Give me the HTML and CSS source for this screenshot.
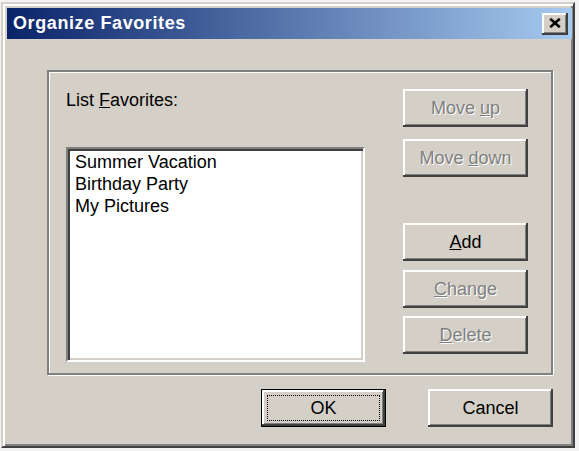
FILE: index.html
```html
<!DOCTYPE html>
<html>
<head>
<meta charset="utf-8">
<title>Organize Favorites</title>
<link rel="stylesheet" href="styles.css">
</head>
<body>
<div class="window">
  <div class="titlebar">
    <span class="title">Organize Favorites</span>
    <button class="close" aria-label="Close">
      <svg width="12" height="10" viewBox="0 0 12 10"><path d="M1.2 0.8 L10.8 9.2 M10.8 0.8 L1.2 9.2" stroke="#000" stroke-width="2.6" fill="none"/></svg>
    </button>
  </div>
  <div class="client">
    <div class="group">
      <div class="left">
        <div class="label">List <u>F</u>avorites:</div>
        <div class="listbox">
          <div class="item">Summer Vacation</div>
          <div class="item">Birthday Party</div>
          <div class="item">My Pictures</div>
        </div>
      </div>
      <div class="right">
        <button class="btn disabled move-up"><span>Move <u>u</u>p</span></button>
        <button class="btn disabled move-down"><span>Move <u>d</u>own</span></button>
        <button class="btn add"><span><u>A</u>dd</span></button>
        <button class="btn disabled change"><span><u>C</u>hange</span></button>
        <button class="btn disabled delete"><span><u>D</u>elete</span></button>
      </div>
    </div>
    <div class="actions">
      <button class="btn default"><span class="focus">OK</span></button>
      <button class="btn"><span>Cancel</span></button>
    </div>
  </div>
</div>
</body>
</html>
```
FILE: styles.css
```css
* {
  box-sizing: border-box;
}

body {
  margin: 0;
  padding: 2px 0 0 1px;
  background: #f2f2f2;
  font-family: "Liberation Sans", Arial, sans-serif;
  font-size: 18px;
  color: #000;
}

/* dialog frame */
.window {
  width: 574px;
  height: 446px;
  background: #d4d0c8;
  border: 2px solid;
  border-color: #d4d0c8 #404040 #404040 #d4d0c8;
  box-shadow: inset 2px 2px 0 #fff, inset -2px -2px 0 #808080;
  padding: 4px 1px 4px 4px;
  display: flex;
  flex-direction: column;
}

.titlebar {
  height: 31px;
  flex: none;
  background: linear-gradient(to right, #0a246a, #a6caf0);
  display: flex;
  align-items: center;
  justify-content: space-between;
  padding: 0 4px 0 6px;
}

.title {
  color: #fff;
  font-weight: bold;
  letter-spacing: 0.6px;
  line-height: 31px;
}

.close {
  width: 26px;
  height: 22px;
  border: none;
  background: #d4d0c8;
  box-shadow: inset -2px -2px 0 #404040, inset 2px 2px 0 #fff, inset -3px -3px 0 #808080;
  display: flex;
  align-items: center;
  justify-content: center;
  padding: 0 1px 1px 0;
}

.client {
  flex: 1;
  padding: 31px 19px 0 40px;
  display: flex;
  flex-direction: column;
}

/* etched group frame */
.group {
  height: 305px;
  border: 2px solid #808080;
  box-shadow: inset 1px 1px 0 #fff, 1px 1px 0 #fff;
  padding: 17px 23px 0 17px;
  display: flex;
  justify-content: space-between;
}

.left {
  display: flex;
  flex-direction: column;
}

.label {
  line-height: 22px;
}

.listbox {
  margin-top: 36px;
  width: 299px;
  height: 215px;
  background: #fff;
  border: 2px solid;
  border-color: #808080 #fff #fff #808080;
  box-shadow: inset 2px 2px 0 #404040, inset -2px -2px 0 #d4d0c8;
  padding: 2px 0 0 7px;
  line-height: 22px;
}

.right {
  display: flex;
  flex-direction: column;
  width: 125px;
}

/* push buttons */
.btn {
  width: 125px;
  height: 38px;
  flex: none;
  padding: 0;
  border: none;
  background: #d4d0c8;
  font-family: inherit;
  font-size: 18px;
  color: #000;
  box-shadow: inset -2px -2px 0 #404040, inset 2px 2px 0 #fff, inset -3px -3px 0 #808080;
  display: flex;
  align-items: center;
  justify-content: center;
  white-space: pre;
}

.btn.disabled {
  color: #808080;
  text-shadow: 1px 1px 0 #fff;
}

.move-down {
  margin-top: 12px;
}

.add {
  margin-top: 46px;
}

.change {
  margin-top: 9px;
}

.delete {
  margin-top: 8px;
}

.actions {
  margin-top: 14px;
  display: flex;
  justify-content: flex-end;
  gap: 42px;
}

.btn.default {
  border: 1px solid #000;
  padding: 5px;
}

.focus {
  flex: 1;
  align-self: stretch;
  border: 1px dotted #000;
  display: flex;
  align-items: center;
  justify-content: center;
}
```
